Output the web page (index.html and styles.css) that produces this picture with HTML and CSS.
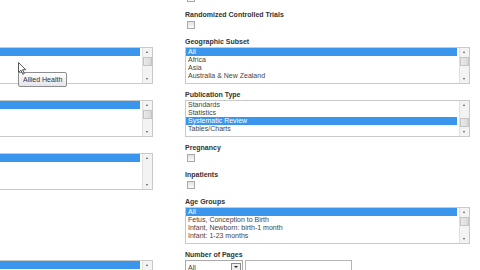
FILE: index.html
```html
<!DOCTYPE html>
<html lang="en">
<head>
	<meta charset="UTF-8">
	<title>Limits</title>
	<link rel="stylesheet" href="styles.css">
</head>
<body>
	<div class="page">
		<div class="col">
			<div class="field check"><div class="label">Full Text</div><span class="box"></span></div>
			<div class="field check"><div class="label">Free Text</div><span class="box"></span></div>
			<div class="field">
				<div class="label">Subject</div>
				<div class="listbox">
					<ul class="items"><li class="sel">All</li><li>Allied Health</li><li>Alternative Medicine</li><li>Anatomy</li></ul>
					<div class="sbar"><span class="arr up"></span><span class="track"><span class="thumb"></span></span><span class="arr down"></span></div>
					<div class="tip">Allied Health</div>
					<svg class="cursor" width="9" height="13" viewBox="0 0 9 13"><path d="M0.5 0.5 L0.5 10.5 L3 8.2 L4.8 12.3 L6.3 11.6 L4.6 7.7 L7.8 7.7 Z" fill="#fff" stroke="#555" stroke-width="1"/></svg>
				</div>
			</div>
			<div class="field">
				<div class="label">Journal Subset</div>
				<div class="listbox">
					<ul class="items"><li class="sel">All</li><li>Biomedical</li><li>Blind Peer Reviewed</li><li>CINAHL Journals</li></ul>
					<div class="sbar"><span class="arr up"></span><span class="track"><span class="thumb"></span></span><span class="arr down"></span></div>
				</div>
			</div>
			<div class="field">
				<div class="label">Language</div>
				<div class="listbox">
					<ul class="items"><li class="sel">All</li><li>English</li><li>French</li></ul>
					<div class="sbar"><span class="arr up"></span><span class="track"></span><span class="arr down"></span></div>
				</div>
			</div>
			<div class="field check"><div class="label">Clinical Queries</div><span class="box"></span></div>
			<div class="field check"><div class="label">Evidence-Based Practice</div><span class="box"></span></div>
			<div class="field">
				<div class="label">Special Interest</div>
				<div class="listbox">
					<ul class="items"><li class="sel">All</li><li>Advanced Nursing Practice</li><li>Case Management</li></ul>
					<div class="sbar"><span class="arr up"></span><span class="track"><span class="thumb"></span></span><span class="arr down"></span></div>
				</div>
			</div>
		</div>

		<div class="col">
			<div class="field check"><div class="label">Research Article</div><span class="box"></span></div>
			<div class="field check"><div class="label">Randomized Controlled Trials</div><span class="box"></span></div>
			<div class="field">
				<div class="label">Geographic Subset</div>
				<div class="listbox">
					<ul class="items"><li class="sel">All</li><li>Africa</li><li>Asia</li><li>Australia &amp; New Zealand</li></ul>
					<div class="sbar"><span class="arr up"></span><span class="track"><span class="thumb"></span></span><span class="arr down"></span></div>
				</div>
			</div>
			<div class="field">
				<div class="label">Publication Type</div>
				<div class="listbox">
					<ul class="items"><li>Standards</li><li>Statistics</li><li class="sel">Systematic Review</li><li>Tables/Charts</li></ul>
					<div class="sbar"><span class="arr up"></span><span class="track end"><span class="thumb"></span></span><span class="arr down"></span></div>
				</div>
			</div>
			<div class="field check"><div class="label">Pregnancy</div><span class="box"></span></div>
			<div class="field check"><div class="label">Inpatients</div><span class="box"></span></div>
			<div class="field">
				<div class="label">Age Groups</div>
				<div class="listbox">
					<ul class="items"><li class="sel">All</li><li>Fetus, Conception to Birth</li><li>Infant, Newborn: birth-1 month</li><li>Infant: 1-23 months</li></ul>
					<div class="sbar"><span class="arr up"></span><span class="track"><span class="thumb"></span></span><span class="arr down"></span></div>
				</div>
			</div>
			<div class="field">
				<div class="label">Number of Pages</div>
				<div class="pages">
					<div class="select"><span class="val">All</span><span class="drop"></span></div>
					<div class="input"></div>
				</div>
			</div>
		</div>
	</div>
</body>
</html>
```

FILE: styles.css
```css
body {margin: 0; background: #fff; color: #444; font-family: "Liberation Sans", Arial, sans-serif; font-size: 7px; overflow: hidden;}
.page {display: grid; grid-template-columns: 283px 285px; column-gap: 32px; align-items: start; margin: -17px 0 0 -130px;}

.field {margin-bottom: 6px;}
.field.check {margin-bottom: 8px;}
.label {height: 10px; line-height: 10px; font-weight: bold; color: #333; white-space: nowrap;}
.box {display: block; width: 8px; height: 8px; margin: 1px 0 0 2px; box-sizing: border-box; border: 1px solid #a9a9a9; background: linear-gradient(#e2e2e2, #fafafa);}

.listbox {position: relative; display: flex; height: 37px; box-sizing: border-box; border: 1px solid #c9c9c9; background: #fff;}
.items {flex: 1; margin: 0 2px 0 0; padding: 0; list-style: none; overflow: hidden;}
.items li {height: 8px; line-height: 8px; padding-left: 2px; white-space: nowrap;}
.items li.sel {background: #3a95ec; color: #fff;}

.sbar {display: flex; flex-direction: column; width: 9px; background: #f3f3f3; border-left: 1px solid #e0e0e0;}
.arr {position: relative; height: 9px; flex: none;}
.arr::after {content: ""; position: absolute; left: 3px; width: 0; height: 0; border-left: 1.5px solid transparent; border-right: 1.5px solid transparent;}
.arr.up::after {top: 3px; border-bottom: 2px solid #555;}
.arr.down::after {top: 4px; border-top: 2px solid #555;}
.track {flex: 1; display: flex; flex-direction: column;}
.track.end {justify-content: flex-end;}
.thumb {display: block; height: 9px; box-sizing: border-box; border: 1px solid #c4c4c4; background: linear-gradient(90deg, #e9e9e9, #d9d9d9);}

.tip {position: absolute; left: 147px; top: 24px; height: 15px; line-height: 14px; box-sizing: border-box; padding: 0 4px; border: 1px solid #8d8d8d; border-radius: 2px; background: linear-gradient(#ffffff, #e4e4ec); color: #333; white-space: nowrap;}
.cursor {position: absolute; left: 147px; top: 14px;}

.pages {display: flex; gap: 2px;}
.select {display: flex; align-items: center; justify-content: space-between; width: 58px; height: 14px; box-sizing: border-box; padding: 0 1px 0 2px; border: 1px solid #a9a9a9;}
.drop {position: relative; width: 10px; height: 8px; box-sizing: border-box; border: 1px solid #8a8a8a; background: #eee;}
.drop::after {content: ""; position: absolute; left: 2px; top: 2px; border-left: 2px solid transparent; border-right: 2px solid transparent; border-top: 2px solid #222;}
.input {width: 107px; height: 14px; box-sizing: border-box; border: 1px solid #b5b5b5;}
```
